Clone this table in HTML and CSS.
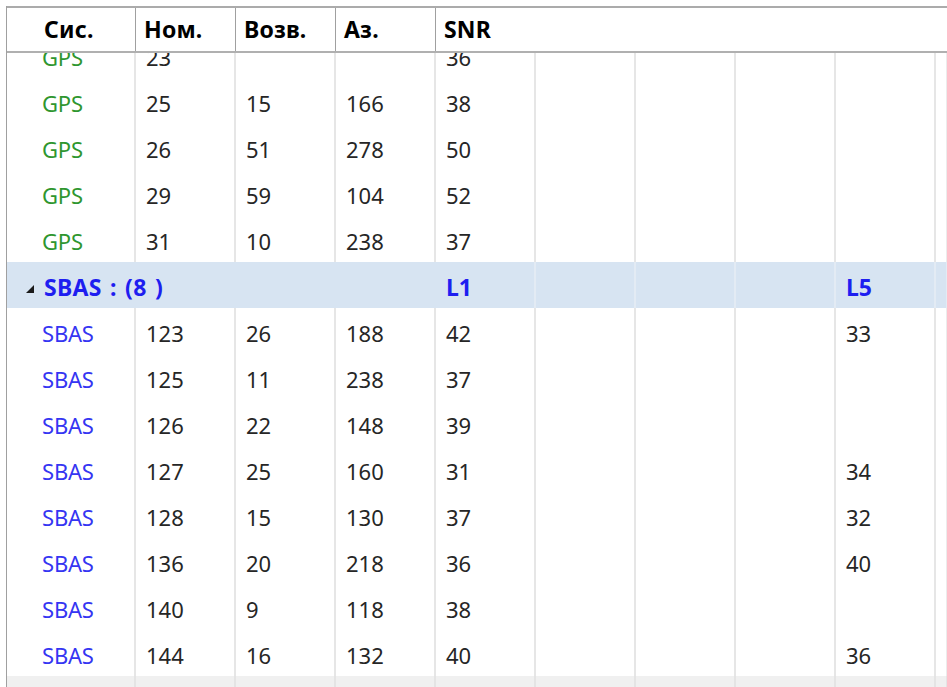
FILE: index.html
```html
<!DOCTYPE html>
<html lang="ru">
<head>
<meta charset="utf-8">
<title>Спутники</title>
<link rel="stylesheet" href="styles.css">
</head>
<body>
<div class="table">
  <div class="header">
    <div class="hcell c1">Сис.</div>
    <div class="hcell">Ном.</div>
    <div class="hcell">Возв.</div>
    <div class="hcell">Аз.</div>
    <div class="hcell last">SNR</div>
  </div>
  <div class="viewport">
    <div class="rows">
      <div class="row gps"><div class="cell c1 sys">GPS</div><div class="cell">23</div><div class="cell"></div><div class="cell"></div><div class="cell">36</div><div class="cell"></div><div class="cell"></div><div class="cell"></div><div class="cell"></div><div class="cell end"></div></div>
      <div class="row gps"><div class="cell c1 sys">GPS</div><div class="cell">25</div><div class="cell">15</div><div class="cell">166</div><div class="cell">38</div><div class="cell"></div><div class="cell"></div><div class="cell"></div><div class="cell"></div><div class="cell end"></div></div>
      <div class="row gps"><div class="cell c1 sys">GPS</div><div class="cell">26</div><div class="cell">51</div><div class="cell">278</div><div class="cell">50</div><div class="cell"></div><div class="cell"></div><div class="cell"></div><div class="cell"></div><div class="cell end"></div></div>
      <div class="row gps"><div class="cell c1 sys">GPS</div><div class="cell">29</div><div class="cell">59</div><div class="cell">104</div><div class="cell">52</div><div class="cell"></div><div class="cell"></div><div class="cell"></div><div class="cell"></div><div class="cell end"></div></div>
      <div class="row gps"><div class="cell c1 sys">GPS</div><div class="cell">31</div><div class="cell">10</div><div class="cell">238</div><div class="cell">37</div><div class="cell"></div><div class="cell"></div><div class="cell"></div><div class="cell"></div><div class="cell end"></div></div>
      <div class="row group">
        <div class="gcell gtitle"><svg class="expander" width="8" height="8" viewBox="0 0 8 8"><polygon points="8,0 8,8 0,8"/></svg><span>SBAS : (8 )</span></div>
        <div class="cell">L1</div><div class="cell"></div><div class="cell"></div><div class="cell"></div><div class="cell">L5</div><div class="cell end"></div>
      </div>
      <div class="row sbas"><div class="cell c1 sys">SBAS</div><div class="cell">123</div><div class="cell">26</div><div class="cell">188</div><div class="cell">42</div><div class="cell"></div><div class="cell"></div><div class="cell"></div><div class="cell">33</div><div class="cell end"></div></div>
      <div class="row sbas"><div class="cell c1 sys">SBAS</div><div class="cell">125</div><div class="cell">11</div><div class="cell">238</div><div class="cell">37</div><div class="cell"></div><div class="cell"></div><div class="cell"></div><div class="cell"></div><div class="cell end"></div></div>
      <div class="row sbas"><div class="cell c1 sys">SBAS</div><div class="cell">126</div><div class="cell">22</div><div class="cell">148</div><div class="cell">39</div><div class="cell"></div><div class="cell"></div><div class="cell"></div><div class="cell"></div><div class="cell end"></div></div>
      <div class="row sbas"><div class="cell c1 sys">SBAS</div><div class="cell">127</div><div class="cell">25</div><div class="cell">160</div><div class="cell">31</div><div class="cell"></div><div class="cell"></div><div class="cell"></div><div class="cell">34</div><div class="cell end"></div></div>
      <div class="row sbas"><div class="cell c1 sys">SBAS</div><div class="cell">128</div><div class="cell">15</div><div class="cell">130</div><div class="cell">37</div><div class="cell"></div><div class="cell"></div><div class="cell"></div><div class="cell">32</div><div class="cell end"></div></div>
      <div class="row sbas"><div class="cell c1 sys">SBAS</div><div class="cell">136</div><div class="cell">20</div><div class="cell">218</div><div class="cell">36</div><div class="cell"></div><div class="cell"></div><div class="cell"></div><div class="cell">40</div><div class="cell end"></div></div>
      <div class="row sbas"><div class="cell c1 sys">SBAS</div><div class="cell">140</div><div class="cell">9</div><div class="cell">118</div><div class="cell">38</div><div class="cell"></div><div class="cell"></div><div class="cell"></div><div class="cell"></div><div class="cell end"></div></div>
      <div class="row sbas"><div class="cell c1 sys">SBAS</div><div class="cell">144</div><div class="cell">16</div><div class="cell">132</div><div class="cell">40</div><div class="cell"></div><div class="cell"></div><div class="cell"></div><div class="cell">36</div><div class="cell end"></div></div>
      <div class="row filler"><div class="cell c1"></div><div class="cell"></div><div class="cell"></div><div class="cell"></div><div class="cell"></div><div class="cell"></div><div class="cell"></div><div class="cell"></div><div class="cell"></div><div class="cell end"></div></div>
    </div>
  </div>
</div>
</body>
</html>
```
FILE: styles.css
```css
html, body {
  margin: 0;
  padding: 0;
  background: #ffffff;
  overflow: hidden;
}

body {
  width: 947px;
  height: 687px;
  font-family: "Noto Sans", "Open Sans", sans-serif;
  font-size: 22px;
  color: #262626;
}

.table {
  margin: 6px 0 0 6px;
  border-left: 1px solid #a0a0a0;
  height: 681px;
  display: flex;
  flex-direction: column;
}

.header {
  display: flex;
  height: 43px;
  border-top: 2px solid #ababab;
  border-bottom: 2px solid #b0b0b0;
  flex: none;
}

.hcell {
  width: 100px;
  box-sizing: border-box;
  border-right: 1px solid #a0a0a0;
  padding-left: 8px;
  font-size: 23px;
  font-weight: 700;
  color: #000;
  line-height: 43px;
  letter-spacing: 0.2px;
}

.hcell.c1 {
  width: 129px;
  padding-left: 37px;
}

.hcell.last {
  flex: 1;
  border-right: none;
}

.viewport {
  flex: 1;
  overflow: hidden;
}

.rows {
  margin-top: -21px;
  display: flex;
  flex-direction: column;
}

.row {
  display: grid;
  grid-template-columns: 129px repeat(8, 100px) 1fr;
  height: 46px;
}

.cell {
  box-sizing: border-box;
  border-right: 2px solid #e6e6e6;
  padding: 4px 0 0 10px;
  line-height: 42px;
  white-space: nowrap;
}

.cell.c1 {
  padding-left: 35px;
  letter-spacing: -0.2px;
}

.cell.end {
  border-right-color: #ececec;
}

.gps .sys {
  color: #2f962f;
}

.sbas .sys {
  color: #3535f2;
}

.group {
  background: #d7e4f2;
}

.group .cell {
  border-right-color: #e3ebf4;
  font-size: 23px;
  font-weight: 700;
  color: #1e1ef0;
}

.gtitle {
  grid-column: 1 / 5;
  display: flex;
  align-items: center;
  padding: 4px 0 0 19px;
  font-size: 23px;
  font-weight: 700;
  color: #1e1ef0;
  letter-spacing: 0.3px;
  word-spacing: 2px;
}

.expander {
  fill: #1a1a1a;
  margin: 4px 10px 0 0;
  flex: none;
}

.filler {
  height: 30px;
  background: #f0f0f0;
}

.filler .cell {
  border-right-color: #e4e4e4;
}
```
